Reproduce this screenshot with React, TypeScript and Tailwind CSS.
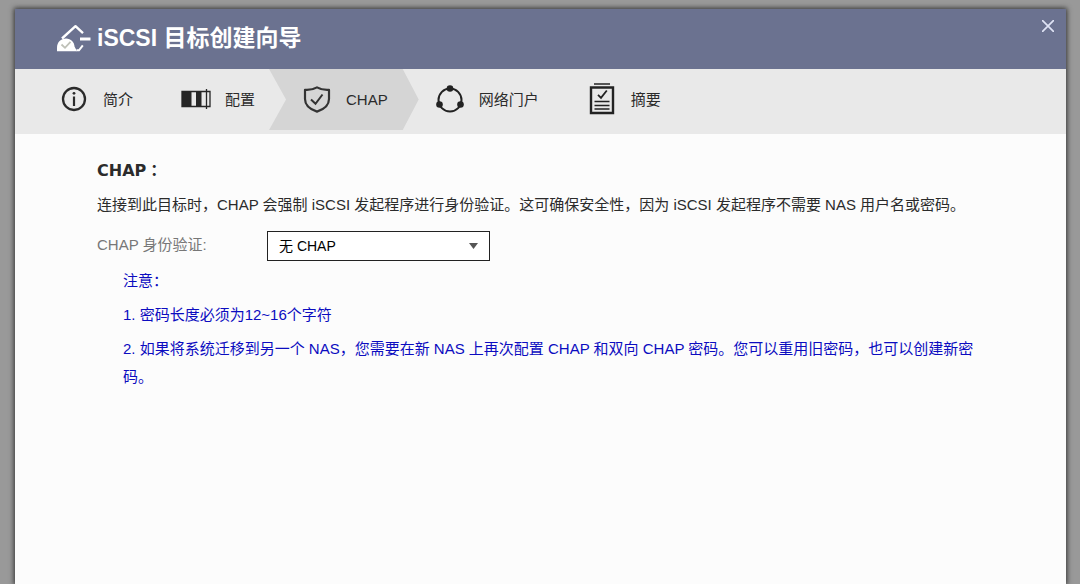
import type { ReactNode } from "react";

type Step = { id: string; label: string; icon: ReactNode; className: string };

const InfoIcon = () => (
  <svg className="h-[26px] w-[26px]" viewBox="0 0 26 26" fill="none" stroke="#2b2b2b" aria-hidden="true">
    <circle cx="13" cy="13" r="11" strokeWidth="2.300" />
    <path d="M13 10.500v9.500" strokeWidth="2.200" />
    <circle cx="13" cy="7.300" r="1.400" fill="#2b2b2b" stroke="none" />
  </svg>
);

const BlocksIcon = () => (
  <svg className="h-[22px] w-[30px]" viewBox="0 0 30 22" fill="#262626" aria-hidden="true">
    <path d="M1 3h9.500v16H1zM15 3h5.500v16H15z" />
    <path d="M1 3.500h28v15H1zM25.500 1v20" fill="none" stroke="#262626" strokeWidth="1.300" />
  </svg>
);

const ShieldIcon = () => (
  <svg className="h-[27px] w-7" viewBox="0 0 28 27" fill="none" stroke="#333" aria-hidden="true">
    <path
      d="M14 1.400C10.500 3.500 6.500 4.200 2 3.900V13c0 6.200 4.800 10.300 12 12.600C21.200 23.300 26 19.200 26 13V3.900C21.500 4.200 17.500 3.500 14 1.400Z"
      strokeWidth="2.200"
      strokeLinejoin="round"
    />
    <path d="m8 13.500 4.500 4.300 7-9.300" strokeWidth="2" />
  </svg>
);

const PortalIcon = () => (
  <svg className="h-7 w-7" viewBox="0 0 28 28" fill="none" stroke="#222" aria-hidden="true">
    <circle cx="14" cy="15" r="11.500" strokeWidth="2" />
    <g fill="#222" stroke="none">
      <circle cx="14" cy="3.500" r="3.300" />
      <circle cx="3.500" cy="19.500" r="3.300" />
      <circle cx="24.500" cy="19.500" r="3.300" />
    </g>
  </svg>
);

const SummaryIcon = () => (
  <svg className="h-8 w-[26px]" viewBox="0 0 26 32" fill="none" stroke="#222" aria-hidden="true">
    <path d="M5 1h16" strokeWidth="1.500" />
    <path d="M2 4.500h22V30H2z" strokeWidth="2.400" />
    <path d="m9 11.800 3 3 5.800-7.300" strokeWidth="1.800" />
    <path d="M5.500 18.500h15M5.500 22.500h15M5.500 26h15" strokeWidth="1.300" />
  </svg>
);

const TargetLogo = () => (
  <svg className="h-7 w-[34px]" viewBox="0 0 34 28" fill="none" aria-hidden="true">
    <path d="M5 14.500 18.500 2.200l7.500 7" stroke="#fff" strokeWidth="2.400" strokeLinejoin="round" />
    <path d="M19.500 26.300h2.500l3.800-5" stroke="#fff" strokeWidth="2" />
    <path d="M23 15H33.500" stroke="#fff" strokeWidth="3" />
    <path d="M0 27.300V24C0 18 4 14.500 9 14.500s8.500 4 8.500 8l2.500 4.800Z" fill="#fff" />
    <path d="m4.500 20.500 3.500 3.300 5.500-6" stroke="#bfc1b8" strokeWidth="1.800" />
  </svg>
);

const steps: Step[] = [
  { id: "intro", label: "简介", icon: <InfoIcon />, className: "gap-4 pr-12" },
  { id: "config", label: "配置", icon: <BlocksIcon />, className: "gap-[14px] pr-[14px]" },
  {
    id: "chap",
    label: "CHAP",
    icon: <ShieldIcon />,
    className:
      "gap-[15px] bg-[#d5d5d5] pl-[34px] pr-[31px] [clip-path:polygon(0_0,calc(100%_-_16px)_0,100%_50%,calc(100%_-_16px)_100%,0_100%,17px_50%)]",
  },
  { id: "portal", label: "网络门户", icon: <PortalIcon />, className: "gap-[15px] pl-[17px] pr-[50px]" },
  { id: "summary", label: "摘要", icon: <SummaryIcon />, className: "gap-4" },
];

export default function App() {
  return (
    <div className="flex min-h-screen flex-col bg-[#999999] pt-[9px] pr-[14px] pl-[15px] font-['Liberation_Sans','Noto_Sans_CJK_SC',sans-serif] text-[15px] text-[#2b2b2b]">
      <main
        role="dialog"
        aria-labelledby="wizard-title"
        className="flex grow flex-col bg-[#fcfcfc] shadow-[0_0_5px_1px_#333333]"
      >
        <header className="flex h-[60px] items-start justify-between bg-[#6b7290] pr-[6px] pl-[42px]">
          <div className="flex h-full items-center gap-[6px] pb-[2px] text-white">
            <TargetLogo />
            <h1 id="wizard-title" className="text-[23px] leading-8 font-bold">
              iSCSI 目标创建向导
            </h1>
          </div>
          <button type="button" aria-label="关闭" className="mt-[5px] p-[6px]">
            <svg className="h-3 w-3" viewBox="0 0 12 12" fill="none" stroke="#dfe3f5" strokeWidth="1.700" aria-hidden="true">
              <path d="m0 0 12 12M12 0 0 12" />
            </svg>
          </button>
        </header>

        <nav aria-label="步骤" className="bg-[#e9e9e9] pb-1 pl-[46px]">
          <ol className="flex h-[61px]">
            {steps.map((step) => (
              <li key={step.id} className="flex">
                <button
                  type="button"
                  aria-current={step.id === "chap" ? "step" : undefined}
                  className={`flex items-center whitespace-nowrap pb-px ${step.className}`}
                >
                  {step.icon}
                  <span className="pt-[2px]">{step.label}</span>
                </button>
              </li>
            ))}
          </ol>
        </nav>

        <section className="px-[82px] pt-[23px]">
          <h2 className="font-['DejaVu_Sans','Noto_Sans_CJK_JP',sans-serif] text-[16px] leading-7 font-bold">CHAP：</h2>
          <p className="mt-[6px] leading-7">
            连接到此目标时，CHAP 会强制 iSCSI 发起程序进行身份验证。这可确保安全性，因为 iSCSI 发起程序不需要 NAS 用户名或密码。
          </p>
          <div className="mt-3 flex items-center">
            <label htmlFor="chap-auth" className="w-[170px] pb-[2px] text-[#777777]">
              CHAP 身份验证:
            </label>
            <div className="relative w-[223px]">
              <select
                id="chap-auth"
                defaultValue="none"
                className="h-[30px] w-full appearance-none border border-[#222222] bg-white px-[11px] text-[14px] text-black"
              >
                <option value="none">无 CHAP</option>
              </select>
              <svg
                className="pointer-events-none absolute top-3 right-3 h-[6px] w-[9px]"
                viewBox="0 0 9 6"
                fill="#555"
                aria-hidden="true"
              >
                <path d="M0 0h9L4.500 6Z" />
              </svg>
            </div>
          </div>
          <div className="mt-[6px] flex flex-col gap-[6px] pl-[26px] leading-7 text-[#0c0cc0]">
            <p>注意：</p>
            <p>1. 密码长度必须为12~16个字符</p>
            <p>
              2. 如果将系统迁移到另一个 NAS，您需要在新 NAS 上再次配置 CHAP 和双向 CHAP 密码。您可以重用旧密码，也可以创建新密码。
            </p>
          </div>
        </section>
      </main>
    </div>
  );
}
